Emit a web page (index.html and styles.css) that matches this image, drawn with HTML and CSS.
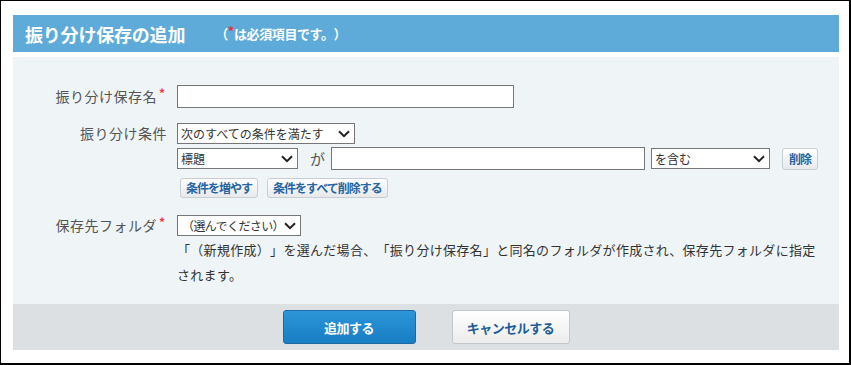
FILE: index.html
```html
<!DOCTYPE html>
<html lang="ja">
<head>
    <meta charset="UTF-8">
    <meta name="viewport" content="width=device-width, initial-scale=1.0">
    <title>振り分け保存の追加</title>
    <link rel="stylesheet" href="styles.css">
</head>
<body>
    <div class="frame">
        <div class="dialog-header">
            <h1 class="dialog-title">振り分け保存の追加</h1>
            <span class="required-note">（<span class="req">*</span>は必須項目です。）</span>
        </div>

        <div class="dialog-body">
            <div class="form-row row-name">
                <label class="form-label" for="filterName">振り分け保存名<span class="req">*</span></label>
                <div class="form-field">
                    <input type="text" id="filterName" class="text-input name-input">
                </div>
            </div>

            <div class="form-row">
                <label class="form-label">振り分け条件</label>
                <div class="form-field">
                    <select class="select match-select">
                        <option>次のすべての条件を満たす</option>
                        <option>次のいずれかの条件を満たす</option>
                    </select>
                    <div class="condition-line">
                        <select class="select field-select">
                            <option>標題</option>
                            <option>差出人</option>
                            <option>宛先</option>
                        </select>
                        <span class="ga">が</span>
                        <input type="text" class="text-input value-input">
                        <select class="select op-select">
                            <option>を含む</option>
                            <option>を含まない</option>
                        </select>
                        <button class="small-button delete-button">削除</button>
                    </div>
                    <div class="condition-actions">
                        <button class="small-button">条件を増やす</button>
                        <button class="small-button">条件をすべて削除する</button>
                    </div>
                </div>
            </div>

            <div class="form-row">
                <label class="form-label">保存先フォルダ<span class="req">*</span></label>
                <div class="form-field">
                    <select class="select folder-select">
                        <option>（選んでください）</option>
                        <option>（新規作成）</option>
                    </select>
                    <p class="field-note">「（新規作成）」を選んだ場合、「振り分け保存名」と同名のフォルダが作成され、保存先フォルダに指定されます。</p>
                </div>
            </div>
        </div>

        <div class="dialog-footer">
            <button class="main-button primary">追加する</button>
            <button class="main-button">キャンセルする</button>
        </div>
    </div>
</body>
</html>
```

FILE: styles.css
```css
body {
    margin: 0;
    font-family: "Noto Sans CJK JP", "Noto Sans", sans-serif;
    text-spacing-trim: space-all;
    background: white;
}
.frame {
    height: 365px;
    box-sizing: border-box;
    border: 1px solid #000;
    border-right-width: 2px;
    border-bottom-width: 2px;
    padding: 14px 10px 0 12px;
}
.dialog-header {
    display: flex;
    align-items: center;
    height: 37px;
    padding-left: 12px;
    background-color: #5eabda;
    color: white;
    margin-bottom: 5px;
}
.dialog-title {
    margin: 0;
    font-size: 18px;
    font-weight: bold;
    line-height: 1;
    letter-spacing: -0.2px;
}
.required-note {
    margin-left: 30px;
    font-size: 13px;
    font-weight: bold;
    line-height: 1;
    letter-spacing: -0.4px;
}
.req {
    color: #e8313a;
    font-size: 13px;
    vertical-align: 3px;
    line-height: 0;
}
.form-label .req {
    margin: 0 2px;
    color: #f0344a;
    font-size: 12px;
    font-weight: bold;
    letter-spacing: 0;
    vertical-align: 4px;
}
.dialog-body {
    height: 247px;
    box-sizing: border-box;
    background-color: #eff4f7;
    padding: 28px 17px 0 0;
}
.form-row {
    display: flex;
    align-items: flex-start;
    margin-bottom: 17px;
}
.row-name {
    margin-bottom: 15px;
}
.form-label {
    width: 154px;
    flex-shrink: 0;
    margin-right: 10px;
    text-align: right;
    font-size: 14px;
    letter-spacing: 0.5px;
    line-height: 21px;
    color: #555;
}
.row-name .form-label {
    line-height: 23px;
}
.form-field {
    flex: 1;
    min-width: 0;
}
.text-input {
    display: block;
    box-sizing: border-box;
    height: 23px;
    margin: 0;
    padding: 0 4px;
    border: 1px solid #767676;
    background: white;
    font-family: inherit;
    font-size: 12px;
}
.name-input {
    width: 337px;
}
.select {
    display: block;
    box-sizing: border-box;
    height: 21px;
    margin: 0;
    padding: 0 16px 0 3px;
    border: 1px solid #767676;
    border-radius: 0;
    -webkit-appearance: none;
    appearance: none;
    background: white url("data:image/svg+xml,%3Csvg xmlns='http://www.w3.org/2000/svg' width='12' height='8' viewBox='0 0 12 8'%3E%3Cpath d='M1 1.2l5 5 5-5' fill='none' stroke='%23222' stroke-width='2'/%3E%3C/svg%3E") no-repeat right 4px center;
    font-family: inherit;
    font-size: 12px;
    line-height: 19px;
    color: #333;
}
.match-select {
    width: 178px;
}
.condition-line {
    display: flex;
    align-items: center;
    margin-top: 3px;
}
.field-select {
    width: 121px;
}
.ga {
    margin: 0 6px 0 12px;
    font-size: 15px;
    line-height: 23px;
    color: #555;
}
.value-input {
    width: 314px;
    margin-right: 6px;
}
.op-select {
    width: 119px;
}
.small-button {
    box-sizing: border-box;
    height: 20px;
    margin: 0;
    padding: 0 5px;
    border: 1px solid #c9ced2;
    border-radius: 3px;
    background: linear-gradient(#ffffff, #e7e9eb);
    font-family: inherit;
    font-size: 12px;
    font-weight: bold;
    letter-spacing: -1px;
    line-height: 18px;
    color: #2766a3;
    cursor: pointer;
}
.delete-button {
    height: 22px;
    margin-left: 12px;
    padding: 0 6px;
    font-size: 12px;
}
.condition-actions {
    display: flex;
    gap: 9px;
    margin-top: 8px;
    padding-left: 3px;
}
.folder-select {
    width: 124px;
    padding-left: 4px;
    letter-spacing: -0.6px;
    text-spacing-trim: normal;
}
.field-note {
    margin: 1px 0 0;
    font-size: 13px;
    letter-spacing: 0.3px;
    line-height: 25px;
    color: #333;
}
.dialog-footer {
    display: flex;
    justify-content: center;
    gap: 36px;
    height: 46px;
    box-sizing: border-box;
    padding-top: 6px;
    background-color: #dde0e3;
}
.main-button {
    box-sizing: border-box;
    width: 118px;
    height: 34px;
    margin: 0;
    border: 1px solid #c2c7cb;
    border-radius: 3px;
    background: linear-gradient(#ffffff, #ececec);
    font-family: inherit;
    font-size: 13px;
    font-weight: bold;
    letter-spacing: -0.5px;
    color: #1d5d99;
    cursor: pointer;
}
.main-button.primary {
    width: 133px;
    border-color: #1b6aa5;
    background: linear-gradient(#2c96d8, #177dc4);
    color: white;
}
```
